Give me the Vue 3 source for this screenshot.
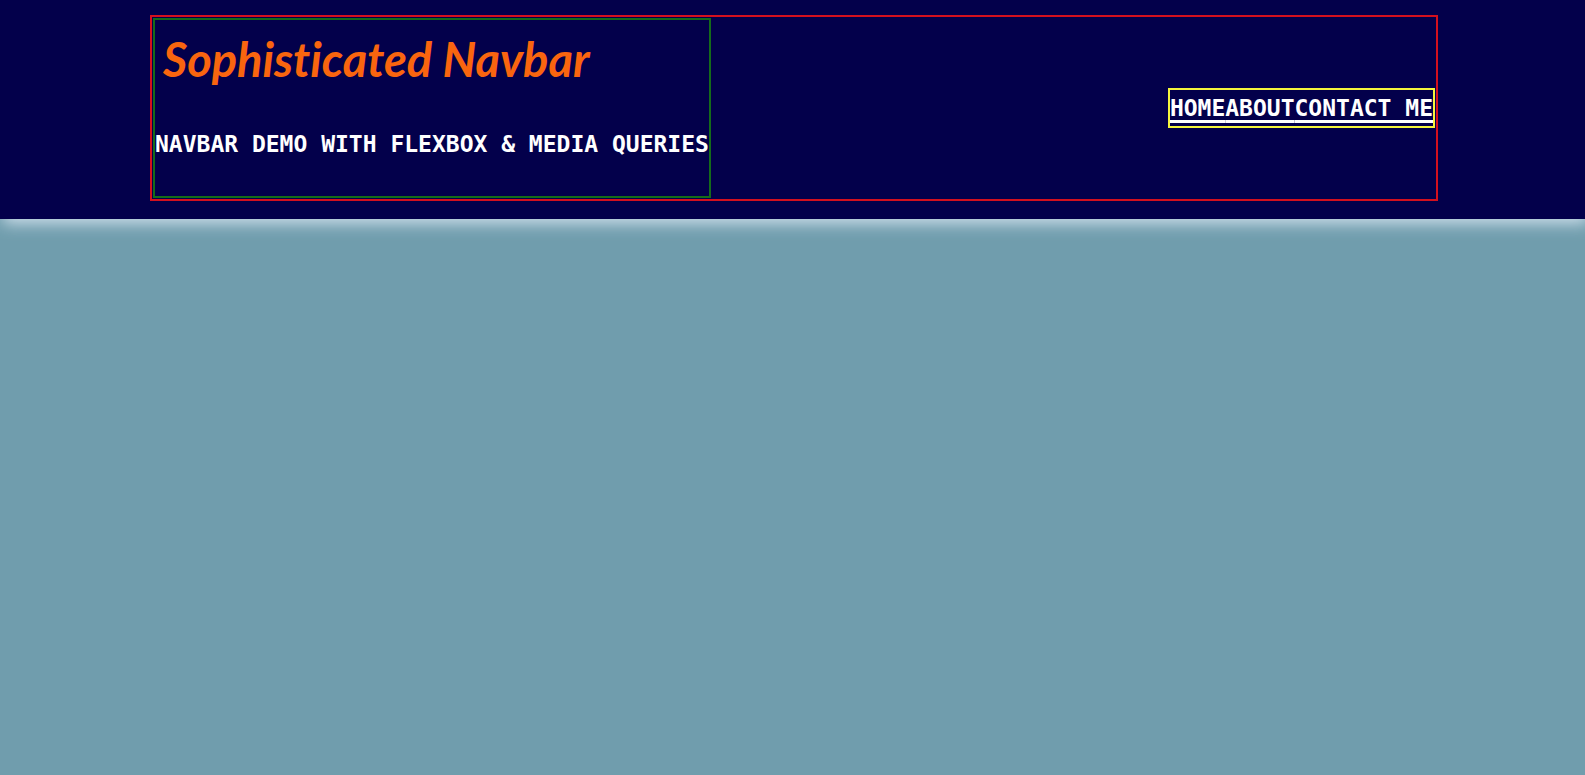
<script setup>
const links = [
  { label: 'HOME', href: '#home' },
  { label: 'ABOUT', href: '#about' },
  { label: 'CONTACT ME', href: '#contact' },
]
</script>

<template>
  <div class="page">
    <header class="header">
      <div class="container">
        <div class="brand">
          <h1 class="title">Sophisticated Navbar</h1>
          <p class="subtitle">NAVBAR DEMO WITH FLEXBOX &amp; MEDIA QUERIES</p>
        </div>
        <nav class="nav">
          <a v-for="link in links" :key="link.href" :href="link.href">{{ link.label }}</a>
        </nav>
      </div>
    </header>
  </div>
</template>

<style>
body {
  margin: 0;
  background: #709dad;
}
</style>

<style scoped>
.page {
  min-height: 100vh;
  background: #709dad;
}

.header {
  position: relative;
  z-index: 1;
  padding: 15px 147px 18px 150px;
  background: #03004b;
  box-shadow: 3px 4px 15px #d3e2ee;
  font-family: "DejaVu Sans Mono", "Liberation Mono", monospace;
  font-size: 23px;
  font-weight: 700;
  line-height: 36px;
  color: #fff;
}

.container {
  display: flex;
  justify-content: space-between;
  align-items: center;
  padding: 1px;
  border: 2px solid #d4101e;
}

.brand {
  border: 2px solid #146c1a;
}

.title {
  margin: 0;
  padding: 0 8px 28px;
  font-family: Lato, "Open Sans", sans-serif;
  font-size: 47px;
  font-style: italic;
  font-weight: 700;
  font-variant-ligatures: none;
  line-height: 78px;
  color: #f9650f;
}

.subtitle {
  margin: 0 0 34px;
  white-space: nowrap;
}

.nav {
  display: flex;
  border: 2px solid #f5f53c;
}

.nav a {
  color: #fff;
  white-space: nowrap;
  text-decoration: underline;
  text-decoration-thickness: 3px;
  text-underline-offset: 4px;
}
</style>
